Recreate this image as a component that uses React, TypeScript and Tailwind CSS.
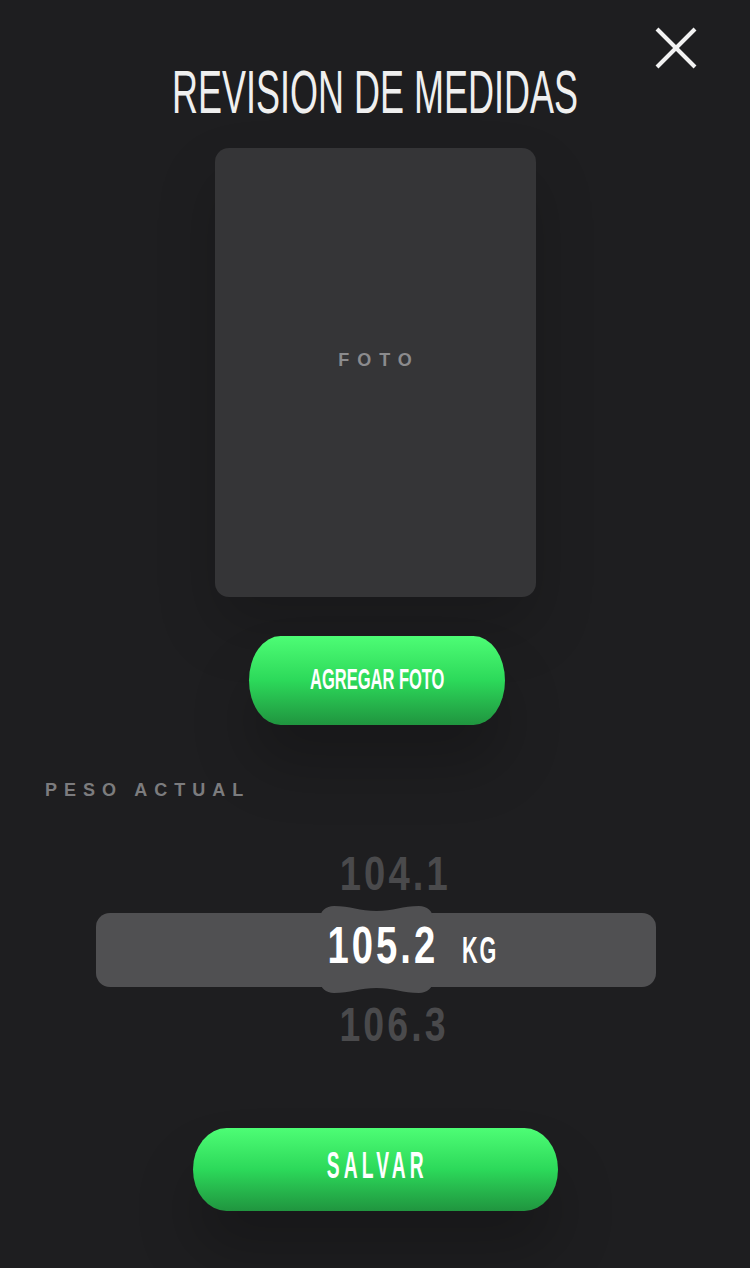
import type { ReactNode } from "react";

// narrow display type: arial squeezed horizontally, centered inside a fixed box
const Cond = ({ box, inner, children }: { box: string; inner: string; children: ReactNode }) => (
  <div className={`flex justify-center ${box}`}>
    <span className={`inline-block whitespace-nowrap leading-none ${inner}`}>{children}</span>
  </div>
);

const CloseIcon = () => (
  <svg width="48" height="48" viewBox="0 0 48 48" className="absolute left-[652px] top-[24px]">
    <line x1="5" y1="5" x2="43" y2="43" stroke="#f2f2f2" strokeWidth="4" />
    <line x1="43" y1="5" x2="5" y2="43" stroke="#f2f2f2" strokeWidth="4" />
  </svg>
);

const Bump = () => (
  <svg
    width="113"
    height="89"
    viewBox="0 0 113 89"
    className="absolute left-[224px] top-[-8px]"
  >
    <path
      d="M0 14 C0 6 6 1 14 1 C30 1 40 6 56.5 6 C73 6 83 1 99 1 C107 1 113 6 113 14 L113 75 C113 83 107 88 99 88 C83 88 73 83 56.5 83 C40 83 30 88 14 88 C6 88 0 83 0 75 Z"
      fill="#505052"
    />
  </svg>
);

export default function App() {
  return (
    <div className="relative flex h-[1268px] w-[750px] flex-col items-center overflow-hidden bg-[#1e1e20] font-['Liberation_Sans',Arial,sans-serif]">
      <CloseIcon />

      <Cond box="mt-[62px] h-[61px] w-full" inner="scale-x-[0.59] text-[61px] text-[#efefef]">
        REVISION DE MEDIDAS
      </Cond>

      <div className="mt-[25px] flex h-[449px] w-[321px] items-center justify-center rounded-[14px] bg-[#353537] pb-[26px] shadow-[0_30px_60px_rgba(0,0,0,0.18)]">
        <span className="pl-[8px] text-[18px] font-bold leading-none tracking-[8px] text-[#8b8b8d]">FOTO</span>
      </div>

      <button className="ml-[4px] mt-[39px] flex h-[89px] w-[256px] items-center justify-center rounded-[32px/45px] bg-linear-to-b from-[#4dfd75] via-[#2cd95a] to-[#20953f] pb-[4px] shadow-[0_40px_60px_rgba(0,0,0,0.22)]">
        <Cond box="w-[132px]" inner="scale-x-[0.55] text-[30px] font-bold text-white">
          AGREGAR FOTO
        </Cond>
      </button>

      <div className="ml-[45px] mt-[56px] self-start text-[18px] font-bold leading-none tracking-[7px] text-[#7c7c7e]">
        PESO ACTUAL
      </div>

      <Cond box="mt-[50px] w-full pl-[40px]" inner="scale-x-[0.78] text-[49px] font-bold tracking-[4px] text-[#4a4a4c]">
        104.1
      </Cond>

      <div className="relative ml-[2px] mt-[15px] flex h-[74px] w-[560px] items-center rounded-[14px] bg-[#505052] pb-[10px] pl-[234px]">
        <Bump />
        <div className="relative flex items-baseline gap-[28px]">
          <Cond box="w-[105px]" inner="scale-x-[0.75] text-[51px] font-bold tracking-[4px] text-white">
            105.2
          </Cond>
          <Cond box="w-[34px]" inner="scale-x-[0.6] text-[36px] font-bold tracking-[3px] text-white">
            KG
          </Cond>
        </div>
      </div>

      <Cond box="mt-[14px] w-full pl-[38px]" inner="scale-x-[0.78] text-[48px] font-bold tracking-[4px] text-[#4a4a4c]">
        106.3
      </Cond>

      <button className="mt-[79px] flex h-[83px] w-[365px] items-center justify-center rounded-[34px/42px] bg-linear-to-b from-[#4dfd75] via-[#2cd95a] to-[#20953f] pb-[8px] shadow-[0_40px_60px_rgba(0,0,0,0.22)]">
        <Cond box="w-[100px] pl-[4px]" inner="scale-x-[0.52] text-[37px] font-bold tracking-[8px] text-white">
          SALVAR
        </Cond>
      </button>
    </div>
  );
}
